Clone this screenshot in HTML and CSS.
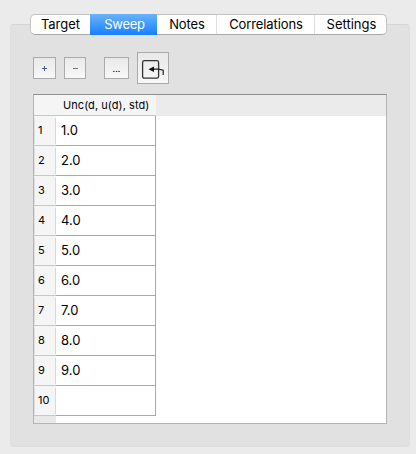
FILE: index.html
```html
<!DOCTYPE html>
<html lang="en">
<head>
<meta charset="utf-8">
<title>Sweep</title>
<link rel="stylesheet" href="styles.css">
</head>
<body>
<main class="panel">
  <nav class="tabs">
    <span class="tab target">Target</span>
    <span class="tab sweep active">Sweep</span>
    <span class="tab notes">Notes</span>
    <span class="tab correlations">Correlations</span>
    <span class="tab settings">Settings</span>
  </nav>
  <div class="toolbar">
    <button class="btn add"><svg width="7" height="7" viewBox="0 0 7 7"><path d="M1 3.5h5M3.5 1v5" stroke="#4a5c86" fill="none"/></svg></button>
    <button class="btn remove"><svg width="7" height="7" viewBox="0 0 7 7"><path d="M1 3.5h5" stroke="#77777f" fill="none"/></svg></button>
    <button class="btn more">...</button>
    <button class="btn import"><svg width="24" height="22" viewBox="0 0 24 22"><rect x="1.6" y="2.6" width="16" height="17.6" rx="1.8" fill="none" stroke="#333" stroke-width="1.3"/><path d="M12 11.2h5.5l4.7 1v4.7" fill="none" stroke="#222" stroke-width="1.2"/><path d="M7.5 11.2 13 8.5v5.4z" fill="#111"/></svg></button>
  </div>
  <div class="view">
    <table class="grid">
      <thead><tr><th class="corner"></th><th class="colhead">Unc(d, u(d), std)</th><th class="rest"></th></tr></thead>
      <tbody>
        <tr><th>1</th><td>1.0</td></tr>
        <tr><th>2</th><td>2.0</td></tr>
        <tr><th>3</th><td>3.0</td></tr>
        <tr><th>4</th><td>4.0</td></tr>
        <tr><th>5</th><td>5.0</td></tr>
        <tr><th>6</th><td>6.0</td></tr>
        <tr><th>7</th><td>7.0</td></tr>
        <tr><th>8</th><td>8.0</td></tr>
        <tr><th>9</th><td>9.0</td></tr>
        <tr><th>10</th><td></td></tr>
      </tbody>
    </table>
    <div class="gutter"></div>
  </div>
</main>
</body>
</html>
```
FILE: styles.css
```css
* { box-sizing: border-box; }
body {
  margin: 0;
  height: 454px;
  padding: 24px 6px 7px 10px;
  overflow: hidden;
  background: #ebebeb;
  color: #000;
  font-family: Inter, "Liberation Sans", sans-serif;
  font-size: 13px;
}
.panel {
  height: 423px;
  padding: 0 23px;
  background: #e1e1e1;
  border: 1px solid #dedede;
  border-top-color: #d6d6d6;
  border-radius: 4px;
}
.tabs {
  display: flex;
  width: 357px;
  height: 21px;
  margin: -11px 0 0 -4px;
  background: #fff;
  border: 1px solid #c3c3c3;
  border-bottom-color: #a9a9a9;
  border-radius: 5px;
}
.tab {
  line-height: 19px;
  text-align: center;
  border-right: 1px solid #dedede;
}
.target { width: 59px; border-right: 0; }
.sweep { width: 67px; padding-left: 2px; letter-spacing: -0.3px; }
.notes { width: 60px; padding-left: 1px; letter-spacing: -0.1px; }
.correlations { width: 98px; padding-left: 1px; letter-spacing: -0.1px; }
.settings { width: 71px; padding-left: 2px; border-right: 0; }
.active {
  height: 21px;
  margin-top: -1px;
  line-height: 21px;
  color: #fff;
  border: 0;
  background: linear-gradient(#6bb3fa, #1680ff);
}
.toolbar {
  display: flex;
  align-items: center;
  height: 32px;
  margin: 17px 0 10px -1px;
}
.btn {
  display: flex;
  align-items: center;
  justify-content: center;
  height: 22px;
  padding: 0;
  border: 1px solid #ababab;
  background: linear-gradient(#e9e9e9, #f8f8f8);
  font: 9px Inter, "Liberation Sans", sans-serif;
  color: #000;
}
.add { width: 23px; }
.remove { width: 22px; margin-left: 8px; }
.more { width: 25px; margin-left: 18px; }
.import { width: 32px; height: 32px; margin-left: 8px; }
.import svg { margin: 1px 0 0; }
.view {
  display: flex;
  flex-direction: column;
  width: 354px;
  height: 330px;
  margin-left: -1px;
  background: #fff;
  border: 1px solid #b4b4b4;
  border-top-color: #8e8e8e;
}
.grid {
  width: 352px;
  table-layout: fixed;
  border-collapse: separate;
  border-spacing: 0;
}
th { font-weight: 400; font-size: 11px; padding: 0; }
.corner { width: 22px; }
.corner, .colhead { height: 21px; background: #f5f5f5; border-bottom: 1px solid #c8c8c8; }
.colhead { width: 100px; padding-left: 7px; text-align: left; white-space: nowrap; letter-spacing: 0.06px; }
.rest { background: #ebebeb; }
tbody th {
  height: 30px;
  padding: 0 0 2px 4px;
  text-align: left;
  background:
    linear-gradient(#d8d8d8, #d8d8d8) right center / 1px 26px no-repeat,
    linear-gradient(#dedede, #dedede) left center / 1px 26px no-repeat,
    #f5f5f5;
  border-bottom: 1px solid #c8c8c8;
}
td {
  height: 30px;
  padding: 0 0 2px 5px;
  border-right: 1px solid #a9a9a9;
  border-bottom: 1px solid #a9a9a9;
}
.gutter { width: 22px; flex: 1; background: #e9e9e9; }
```
